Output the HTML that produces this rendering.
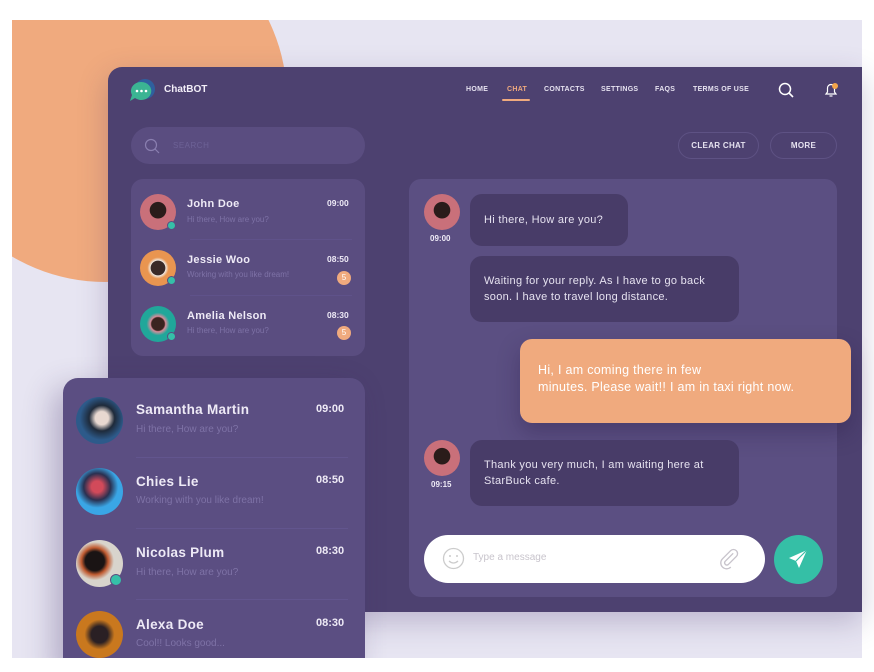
<!DOCTYPE html>
<html><head><style>
*{margin:0;padding:0;box-sizing:border-box}
body{width:874px;height:672px;background:#fff;position:relative;overflow:hidden;font-family:"Liberation Sans",sans-serif;}
.frame{position:absolute;left:12px;top:20px;width:850px;height:638px;background:#e7e5f2;overflow:hidden}
.orange{position:absolute;left:-89px;top:-102px;width:364px;height:364px;border-radius:50%;background:#f0aa7e}
.main{position:absolute;left:108px;top:67px;width:754px;height:545px;background:#4d4170;border-radius:14px 0 0 0;box-shadow:0 10px 30px rgba(60,40,100,.25)}
.abs{position:absolute}
.nav{position:absolute;top:86px;font-size:7px;font-weight:bold;color:#e6e2f0;letter-spacing:.3px}
.search{left:131px;top:127px;width:234px;height:37px;border-radius:19px;background:#5a4d80}
.card{background:#5a4d80;border-radius:12px}
.av{position:absolute;border-radius:50%}
.dot{position:absolute;width:9px;height:9px;border-radius:50%;background:#35c0a8;border:1px solid #5a4d80}
.nm{position:absolute;color:#eeeaf6;font-size:11px;font-weight:bold;letter-spacing:.3px}
.ms{position:absolute;color:#7e72a6;font-size:8px}
.tm{position:absolute;color:#eeeaf6;font-size:8.5px;font-weight:bold}
.badge{position:absolute;width:14px;height:14px;border-radius:50%;background:#f0aa7e;color:#fff;font-size:8px;text-align:center;line-height:14px}
.bub{position:absolute;background:#483c68;border-radius:12px;color:#e6e2f0;font-size:11px;line-height:16px;padding:0 14px;letter-spacing:.3px}
.btn{position:absolute;top:132px;height:27px;border:1px solid #5e5284;border-radius:14px;color:#e6e2f0;font-size:8px;font-weight:bold;text-align:center;line-height:26px;letter-spacing:.3px}
.sep{position:absolute;height:1px;background:#5f528a}
</style></head><body>
<div class="frame"><div class="orange"></div></div>
<div class="main"></div>
<svg class="abs" style="left:129px;top:78px" width="28" height="26" viewBox="0 0 28 26"><circle cx="16" cy="11" r="10" fill="#2f5f9e"/><path d="M12 4a10 9 0 1 1 -6 16l-5 3 2-6a10 9 0 0 1 9-13z" fill="#3bb493"/><circle cx="8" cy="13" r="1.3" fill="#fff"/><circle cx="12.5" cy="13" r="1.3" fill="#fff"/><circle cx="17" cy="13" r="1.3" fill="#fff"/></svg>
<div class="abs" style="left:164px;top:84px;color:#f2eef8;font-size:10px;font-weight:bold">ChatBOT</div>
<div class="nav" style="left:466px">HOME</div>
<div class="nav" style="left:507px;color:#f0aa7e">CHAT</div>
<div class="abs" style="left:502px;top:99px;width:28px;height:2px;background:#f0aa7e;border-radius:1px"></div>
<div class="nav" style="left:544px">CONTACTS</div>
<div class="nav" style="left:601px">SETTINGS</div>
<div class="nav" style="left:655px">FAQS</div>
<div class="nav" style="left:693px">TERMS OF USE</div>
<svg class="abs" style="left:778px;top:82px" width="16" height="16" viewBox="0 0 16 16"><circle cx="7" cy="7" r="5.5" fill="none" stroke="#fff" stroke-width="1.5"/><path d="M11 11l4 4" stroke="#fff" stroke-width="1.6"/></svg>
<svg class="abs" style="left:823px;top:81px" width="16" height="17" viewBox="0 0 16 17"><path d="M3 13h10l-1.5-2V7a3.5 3.5 0 0 0-7 0v4z" fill="none" stroke="#fff" stroke-width="1.2"/><path d="M6.5 15h3" stroke="#fff" stroke-width="1.2"/><circle cx="12" cy="5" r="3" fill="#f3a54a"/></svg>
<div class="btn" style="left:678px;width:81px">CLEAR CHAT</div>
<div class="btn" style="left:770px;width:67px">MORE</div>
<div class="abs search"></div>
<svg class="abs" style="left:144px;top:138px" width="16" height="16" viewBox="0 0 16 16"><circle cx="7" cy="7" r="5.5" fill="none" stroke="#8a7fb0" stroke-width="1.2"/><path d="M11 11l4 4" stroke="#8a7fb0" stroke-width="1.2"/></svg>
<div class="abs" style="left:173px;top:141px;color:#6d6296;font-size:8px;letter-spacing:.5px">SEARCH</div>
<div class="abs card" style="left:131px;top:179px;width:234px;height:177px"></div>
<div class="av" style="left:140px;top:194px;width:36px;height:36px;background:radial-gradient(circle at 50% 45%,#2a1c1a 30%,#c9707a 32%)"></div><div class="dot" style="left:167px;top:221px"></div>
<div class="nm" style="left:187px;top:198px">John Doe</div><div class="ms" style="left:187px;top:215px">Hi there, How are you?</div><div class="tm" style="left:327px;top:198px">09:00</div>
<div class="sep" style="left:190px;top:239px;width:162px"></div>
<div class="av" style="left:140px;top:250px;width:36px;height:36px;background:radial-gradient(circle at 50% 50%,#3a2a28 28%,#f0ece8 30%,#e99550 42%)"></div><div class="dot" style="left:167px;top:276px"></div>
<div class="nm" style="left:187px;top:254px">Jessie Woo</div><div class="ms" style="left:187px;top:270px">Working with you like dream!</div><div class="tm" style="left:327px;top:254px">08:50</div><div class="badge" style="left:337px;top:271px">5</div>
<div class="sep" style="left:190px;top:295px;width:162px"></div>
<div class="av" style="left:140px;top:306px;width:36px;height:36px;background:radial-gradient(circle at 50% 50%,#3a2420 25%,#d98c9a 30%,#20a79a 45%)"></div><div class="dot" style="left:167px;top:332px"></div>
<div class="nm" style="left:187px;top:310px">Amelia Nelson</div><div class="ms" style="left:187px;top:326px">Hi there, How are you?</div><div class="tm" style="left:327px;top:310px">08:30</div><div class="badge" style="left:337px;top:326px">5</div>
<div class="abs card" style="left:409px;top:179px;width:428px;height:418px;background:#5b4f82"></div>
<div class="av" style="left:424px;top:194px;width:36px;height:36px;background:radial-gradient(circle at 50% 45%,#2a1c1a 30%,#c9707a 32%)"></div>
<div class="abs" style="left:430px;top:234px;color:#eeeaf6;font-size:8px;font-weight:bold">09:00</div>
<div class="bub" style="left:470px;top:194px;width:158px;height:52px;line-height:52px">Hi there, How are you?</div>
<div class="bub" style="left:470px;top:256px;width:269px;height:66px;padding-top:17px">Waiting for your reply. As I have to go back soon. I have to travel long distance.</div>
<div class="bub" style="left:520px;top:339px;width:331px;height:84px;background:#f0aa7e;color:#fff;font-size:12.5px;line-height:17px;padding:23px 18px;box-shadow:0 10px 22px rgba(40,25,70,.35)">Hi, I am coming there in few<br>minutes. Please wait!! I am in taxi right now.</div>
<div class="av" style="left:424px;top:440px;width:36px;height:36px;background:radial-gradient(circle at 50% 45%,#2a1c1a 30%,#c9707a 32%)"></div>
<div class="abs" style="left:431px;top:480px;color:#eeeaf6;font-size:8px;font-weight:bold">09:15</div>
<div class="bub" style="left:470px;top:440px;width:269px;height:66px;padding-top:17px">Thank you very much, I am waiting here at StarBuck cafe.</div>
<div class="abs" style="left:424px;top:535px;width:341px;height:48px;border-radius:24px;background:#fff"></div>
<svg class="abs" style="left:442px;top:547px" width="23" height="23" viewBox="0 0 23 23"><circle cx="11.5" cy="11.5" r="10" fill="none" stroke="#ccc" stroke-width="1.3"/><circle cx="8" cy="9" r="1" fill="#ccc"/><circle cx="15" cy="9" r="1" fill="#ccc"/><path d="M7 14q4.5 4 9 0" fill="none" stroke="#ccc" stroke-width="1.3"/></svg>
<div class="abs" style="left:473px;top:552px;color:#c8c4cc;font-size:10px">Type a message</div>
<svg class="abs" style="left:717px;top:547px" width="24" height="24" viewBox="0 0 24 24"><path d="M17 6l-9 9a2.5 2.5 0 0 0 3.5 3.5l9-9a4.5 4.5 0 0 0-6.4-6.4l-9 9a6.5 6.5 0 0 0 9.2 9.2" fill="none" stroke="#c8c4cc" stroke-width="1.5" transform="scale(.9) translate(1,1)"/></svg>
<div class="abs" style="left:774px;top:535px;width:49px;height:49px;border-radius:50%;background:#35bfa6"></div>
<svg class="abs" style="left:787px;top:548px" width="22" height="22" viewBox="0 0 22 22"><path d="M20 2L2 10l7 3 3 7z" fill="#fff"/><path d="M20 2L9 13" stroke="#35bfa6" stroke-width="1.2"/></svg>
<div class="abs" style="left:63px;top:378px;width:302px;height:294px;background:#5b4e82;border-radius:15px 15px 0 0;box-shadow:-10px 10px 30px rgba(60,40,100,.3)"></div>
<div class="av" style="left:76px;top:397px;width:47px;height:47px;background:radial-gradient(circle at 55% 45%,#e8d8d0 18%,#1e2a3a 35%,#2d5a8a 60%)"></div>
<div class="nm" style="left:136px;top:402px;font-size:13.5px">Samantha Martin</div><div class="ms" style="left:136px;top:424px;font-size:10px">Hi there, How are you?</div><div class="tm" style="left:316px;top:403px;font-size:11px">09:00</div>
<div class="sep" style="left:136px;top:457px;width:212px;background:#62558e"></div>
<div class="av" style="left:76px;top:468px;width:47px;height:47px;background:radial-gradient(circle at 45% 40%,#d24a5a 15%,#2a3050 35%,#3aa6e6 55%)"></div>
<div class="nm" style="left:136px;top:474px;font-size:13.5px">Chies Lie</div><div class="ms" style="left:136px;top:495px;font-size:10px">Working with you like dream!</div><div class="tm" style="left:316px;top:474px;font-size:11px">08:50</div>
<div class="sep" style="left:136px;top:528px;width:212px;background:#62558e"></div>
<div class="av" style="left:76px;top:540px;width:47px;height:47px;background:radial-gradient(circle at 40% 45%,#1a1414 25%,#c05a30 35%,#d8d4cc 50%)"></div><div class="dot" style="left:110px;top:574px;width:12px;height:12px"></div>
<div class="nm" style="left:136px;top:545px;font-size:13.5px">Nicolas Plum</div><div class="ms" style="left:136px;top:567px;font-size:10px">Hi there, How are you?</div><div class="tm" style="left:316px;top:545px;font-size:11px">08:30</div>
<div class="sep" style="left:136px;top:599px;width:212px;background:#62558e"></div>
<div class="av" style="left:76px;top:611px;width:47px;height:47px;background:radial-gradient(circle at 50% 50%,#2a2024 25%,#c9781e 45%)"></div>
<div class="nm" style="left:136px;top:617px;font-size:13.5px">Alexa Doe</div><div class="ms" style="left:136px;top:638px;font-size:10px">Cool!! Looks good...</div><div class="tm" style="left:316px;top:617px;font-size:11px">08:30</div>
<div class="abs" style="left:0;top:658px;width:874px;height:14px;background:#fff"></div>
</body></html>
